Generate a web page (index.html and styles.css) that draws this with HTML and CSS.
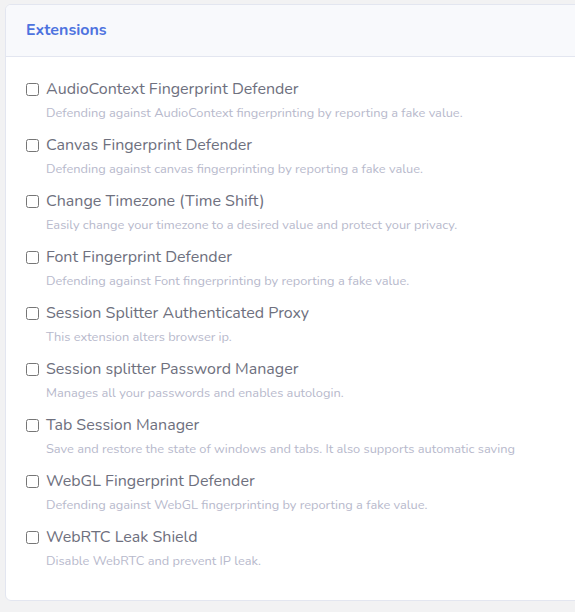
FILE: index.html
```html
<!DOCTYPE html>
<html lang="en">
<head>
    <meta charset="UTF-8">
    <meta name="viewport" content="width=device-width, initial-scale=1.0">
    <title>Extensions</title>
    <link rel="stylesheet" href="styles.css">
</head>
<body>
    <div class="card">
        <div class="card-header">
            <h6>Extensions</h6>
        </div>
        <div class="card-body">
            <label class="ext">
                <span class="ext-title"><input type="checkbox"> AudioContext Fingerprint Defender</span>
                <span class="ext-desc">Defending against AudioContext fingerprinting by reporting a fake value.</span>
            </label>
            <label class="ext">
                <span class="ext-title"><input type="checkbox"> Canvas Fingerprint Defender</span>
                <span class="ext-desc">Defending against canvas fingerprinting by reporting a fake value.</span>
            </label>
            <label class="ext">
                <span class="ext-title"><input type="checkbox"> Change Timezone (Time Shift)</span>
                <span class="ext-desc">Easily change your timezone to a desired value and protect your privacy.</span>
            </label>
            <label class="ext">
                <span class="ext-title"><input type="checkbox"> Font Fingerprint Defender</span>
                <span class="ext-desc">Defending against Font fingerprinting by reporting a fake value.</span>
            </label>
            <label class="ext">
                <span class="ext-title"><input type="checkbox"> Session Splitter Authenticated Proxy</span>
                <span class="ext-desc">This extension alters browser ip.</span>
            </label>
            <label class="ext">
                <span class="ext-title"><input type="checkbox"> Session splitter Password Manager</span>
                <span class="ext-desc">Manages all your passwords and enables autologin.</span>
            </label>
            <label class="ext">
                <span class="ext-title"><input type="checkbox"> Tab Session Manager</span>
                <span class="ext-desc">Save and restore the state of windows and tabs. It also supports automatic saving</span>
            </label>
            <label class="ext">
                <span class="ext-title"><input type="checkbox"> WebGL Fingerprint Defender</span>
                <span class="ext-desc">Defending against WebGL fingerprinting by reporting a fake value.</span>
            </label>
            <label class="ext">
                <span class="ext-title"><input type="checkbox"> WebRTC Leak Shield</span>
                <span class="ext-desc">Disable WebRTC and prevent IP leak.</span>
            </label>
        </div>
    </div>
</body>
</html>
```
FILE: styles.css
```css
body {
    font-family: Nunito, "Noto Sans", sans-serif;
    margin: 0;
    padding: 4px 0 0 5px;
    background-color: #f2f2f3;
    overflow: hidden;
}
.card {
    width: 590px;
    height: 597px;
    background: white;
    border: 1px solid #e3e6f0;
    border-radius: 6px;
    box-sizing: border-box;
    overflow: hidden;
}
.card-header {
    background-color: #f8f9fc;
    border-bottom: 1px solid #e3e6f0;
    height: 52px;
    box-sizing: border-box;
    padding: 0 20px 1px;
    display: flex;
    align-items: center;
}
.card-header h6 {
    margin: 0;
    font-size: 16px;
    font-weight: 700;
    color: #4e73df;
}
.card-body {
    padding: 20px 20px;
}
.ext {
    display: flex;
    flex-direction: column;
    margin-bottom: 8px;
}
.ext-title {
    display: flex;
    align-items: center;
    font-size: 16px;
    line-height: 24px;
    color: #6e707e;
}
.ext-title input {
    margin: 0 7px 0 0;
    width: 13px;
    height: 13px;
}
.ext-desc {
    font-size: 12.8px;
    line-height: 24px;
    color: #b7b9cc;
    padding-left: 20px;
}
```
